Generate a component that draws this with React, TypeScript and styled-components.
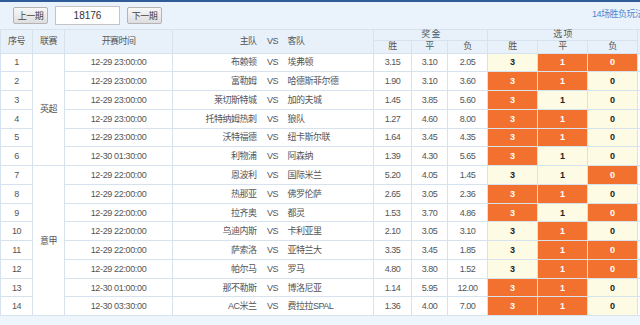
import React from "react";
import styled, { createGlobalStyle } from "styled-components";

// estilo global da pagina
const GlobalStyle = createGlobalStyle`
  html, body {
    margin: 0;
    padding: 0;
    overflow: hidden;
    background: #eef5fb;
    font-family: "Liberation Sans", "Noto Sans CJK SC", sans-serif;
  }
`;

const Page = styled.div`
  width: 640px;
  height: 325px;
  border-top: 2px solid #2f5b99;
  box-sizing: border-box;
  background: #eef5fb;
  overflow: hidden;
`;

// barra superior com os botoes de periodo
const Toolbar = styled.div`
  display: flex;
  align-items: center;
  height: 27px;
  padding-left: 13px;
  gap: 7px;
  background: #eaf3fb;
  overflow: hidden;
`;

const PagerButton = styled.button`
  width: 35px;
  height: 17px;
  padding: 0;
  border: 1px solid #b4b4b4;
  border-radius: 2px;
  background: linear-gradient(#f8f8f8, #dedede);
  font-family: "Liberation Sans", "Noto Sans CJK SC", sans-serif;
  font-size: 9px;
  letter-spacing: -0.5px;
  color: #444;
`;

const IssueInput = styled.div`
  width: 63px;
  height: 17px;
  border: 1px solid #c4c4c4;
  background: #fff;
  font-size: 10px;
  line-height: 17px;
  text-align: center;
  color: #333;
`;

const RuleLink = styled.span`
  margin-left: auto;
  margin-top: -4px;
  width: 48px;
  overflow: hidden;
  font-size: 9px;
  letter-spacing: -0.5px;
  color: #4d86cf;
  white-space: nowrap;
`;

// tabela dos jogos
const Grid = styled.table`
  width: 643px;
  table-layout: fixed;
  border-collapse: collapse;
  font-size: 9px;
  color: #555;
  td, th {
    border: 1px solid #d6e3ee;
    padding: 0;
    white-space: nowrap;
  }
  td {
    overflow: hidden;
  }
`;

const HeadCell = styled.th<{ $align?: string; $h?: number }>`
  background: #e8f1fa;
  font-weight: normal;
  text-align: ${(p) => p.$align || "center"};
  height: ${(p) => (p.$h ? `${p.$h}px` : "auto")};
  line-height: 9px;
  letter-spacing: -0.6px;
  color: #555;
  padding: ${(p) => (p.$align === "right" ? "0 4px 0 0" : p.$align === "left" ? "0 0 0 3px" : "0")} !important;
  &.vs {
    border-left-style: hidden;
    border-right-style: hidden;
  }
`;

const Row = styled.tr`
  height: 18.78px;
  background: #fff;
`;

const Cell = styled.td<{ $align?: string; $time?: boolean }>`
  text-align: ${(p) => p.$align || "center"};
  line-height: 10px;
  letter-spacing: ${(p) => (p.$time ? "-0.35px" : "-0.5px")};
  padding: ${(p) => (p.$align === "right" ? "0 4px 0 0" : p.$align === "left" ? "0 0 0 3px" : "0")} !important;
  color: #555;
  &.vs {
    border-left-style: hidden;
    border-right-style: hidden;
  }
`;

const ResultCell = styled.td<{ $hit: boolean }>`
  text-align: center;
  line-height: 10px;
  font-weight: bold;
  font-size: 9px;
  background: ${(p) => (p.$hit ? "#f2712f" : "#fefbe4")};
  color: ${(p) => (p.$hit ? "#fff" : "#222")};
`;

type Match = [string, string, string, string, string, string, string, string];

const games: Match[] = [
  ["1", "12-29 23:00:00", "布赖顿", "埃弗顿", "3.15", "3.10", "2.05", "011"],
  ["2", "12-29 23:00:00", "富勒姆", "哈德斯菲尔德", "1.90", "3.10", "3.60", "110"],
  ["3", "12-29 23:00:00", "莱切斯特城", "加的夫城", "1.45", "3.85", "5.60", "100"],
  ["4", "12-29 23:00:00", "托特纳姆热刺", "狼队", "1.27", "4.60", "8.00", "110"],
  ["5", "12-29 23:00:00", "沃特福德", "纽卡斯尔联", "1.64", "3.45", "4.35", "110"],
  ["6", "12-30 01:30:00", "利物浦", "阿森纳", "1.39", "4.30", "5.65", "100"],
  ["7", "12-29 22:00:00", "恩波利", "国际米兰", "5.20", "4.05", "1.45", "001"],
  ["8", "12-29 22:00:00", "热那亚", "佛罗伦萨", "2.65", "3.05", "2.36", "110"],
  ["9", "12-29 22:00:00", "拉齐奥", "都灵", "1.53", "3.70", "4.86", "101"],
  ["10", "12-29 22:00:00", "乌迪内斯", "卡利亚里", "2.10", "3.05", "3.10", "010"],
  ["11", "12-29 22:00:00", "萨索洛", "亚特兰大", "3.35", "3.45", "1.85", "011"],
  ["12", "12-29 22:00:00", "帕尔马", "罗马", "4.80", "3.80", "1.52", "011"],
  ["13", "12-30 01:00:00", "那不勒斯", "博洛尼亚", "1.14", "5.95", "12.00", "110"],
  ["14", "12-30 03:30:00", "AC米兰", "费拉拉SPAL", "1.36", "4.00", "7.00", "110"],
];

const widths = [32, 32, 108, 88, 24, 89, 38, 36, 40, 50, 50, 50, 6];

const App = () => {
  return (
    <Page>
      <GlobalStyle />
      <Toolbar>
        <PagerButton>上一期</PagerButton>
        <IssueInput>18176</IssueInput>
        <PagerButton>下一期</PagerButton>
        <RuleLink>14场胜负玩法</RuleLink>
      </Toolbar>
      <Grid>
        <colgroup>
          {widths.map((w, i) => (
            <col key={i} style={{ width: w }} />
          ))}
        </colgroup>
        <thead>
          <tr>
            <HeadCell rowSpan={2}>序号</HeadCell>
            <HeadCell rowSpan={2}>联赛</HeadCell>
            <HeadCell rowSpan={2}>开赛时间</HeadCell>
            <HeadCell rowSpan={2} $align="right">主队</HeadCell>
            <HeadCell rowSpan={2} className="vs">VS</HeadCell>
            <HeadCell rowSpan={2} $align="left">客队</HeadCell>
            <HeadCell colSpan={3} $h={9.5}>奖 金</HeadCell>
            <HeadCell colSpan={3} $h={9.5}>选 项</HeadCell>
            <HeadCell rowSpan={2} />
          </tr>
          <tr>
            {["胜", "平", "负", "胜", "平", "负"].map((t, i) => (
              <HeadCell key={i} $h={12}>
                {t}
              </HeadCell>
            ))}
          </tr>
        </thead>
        <tbody>
          {games.map((g, i) => (
            <Row key={g[0]}>
              <Cell>{g[0]}</Cell>
              {i === 0 && <Cell rowSpan={6}>英超</Cell>}
              {i === 6 && <Cell rowSpan={8}>意甲</Cell>}
              <Cell $time>{g[1]}</Cell>
              <Cell $align="right">{g[2]}</Cell>
              <Cell className="vs">VS</Cell>
              <Cell $align="left">{g[3]}</Cell>
              <Cell>{g[4]}</Cell>
              <Cell>{g[5]}</Cell>
              <Cell>{g[6]}</Cell>
              {["3", "1", "0"].map((v, k) => (
                <ResultCell key={v} $hit={g[7][k] === "1"}>
                  {v}
                </ResultCell>
              ))}
              <Cell />
            </Row>
          ))}
        </tbody>
      </Grid>
    </Page>
  );
};

export default App;
